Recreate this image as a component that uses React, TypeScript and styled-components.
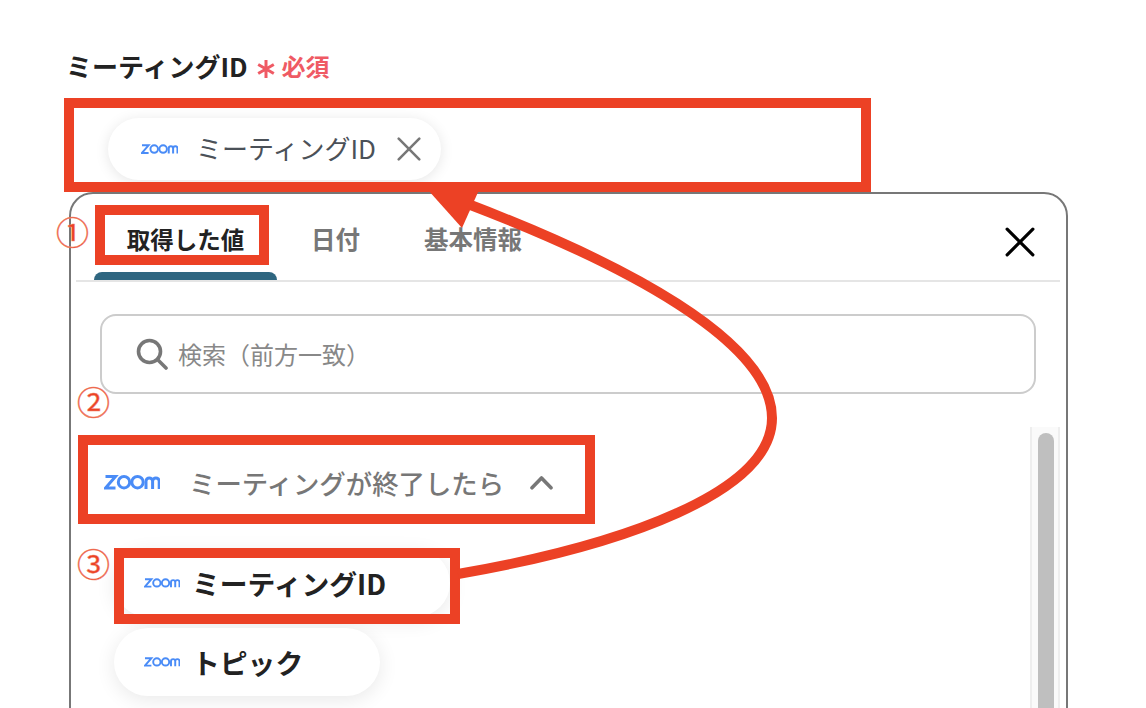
import React from "react";
import styled, { createGlobalStyle } from "styled-components";

const GlobalStyle = createGlobalStyle`
  html, body {
    margin: 0;
    padding: 0;
    background: #fff;
  }
  * {
    box-sizing: border-box;
  }
`;

const ZoomLogo = ({ width }: { width: number }) => (
  <svg width={width} viewBox="0 0 56 18" fill="none" stroke="#4a8cf7" strokeWidth="3">
    <path d="M1.5 3.5H11.5L1.5 15H11.5" />
    <circle cx="20" cy="9.2" r="5.7" />
    <circle cx="33.5" cy="9.2" r="5.7" />
    <path d="M42 16V8.2a3.3 3.3 0 0 1 6.6 0V16M48.6 8.2a3.3 3.3 0 0 1 6.6 0V16" />
  </svg>
);

const CrossIcon = ({ size, color, weight }: { size: number; color: string; weight: number }) => (
  <svg width={size} height={size} viewBox="0 0 28 28" fill="none" stroke={color} strokeWidth={weight} strokeLinecap="round">
    <path d="M2 2L26 26M26 2L2 26" />
  </svg>
);

const App = () => {
  return (
    <Page>
      <GlobalStyle />
      <LabelRow>
        <FieldLabel>ミーティングID</FieldLabel>
        <AsteriskMark width="20" height="20" viewBox="0 0 20 20" fill="none" stroke="#ef5a64" strokeWidth="3">
          <path d="M10 1V19M2.2 5.5L17.8 14.5M17.8 5.5L2.2 14.5" />
        </AsteriskMark>
        <Required>必須</Required>
      </LabelRow>

      <Field>
        <SelectedChip>
          <ZoomLogo width={37} />
          <ChipText>ミーティングID</ChipText>
          <CrossIcon size={24} color="#777" weight={3} />
        </SelectedChip>
      </Field>

      <Panel>
        <TabBar>
          <Tab $active>取得した値</Tab>
          <Tab>日付</Tab>
          <Tab>基本情報</Tab>
          <CloseButton>
            <CrossIcon size={30} color="#000" weight={3} />
          </CloseButton>
        </TabBar>

        <SearchBox>
          <svg width="32" height="32" viewBox="0 0 32 32" fill="none" stroke="#777" strokeWidth="3.6" strokeLinecap="round">
            <circle cx="13.5" cy="13.5" r="11" />
            <path d="M21.5 21.5L30 30" />
          </svg>
          <Placeholder>検索（前方一致）</Placeholder>
        </SearchBox>

        <ListArea>
          <List>
            <GroupRow>
              <ZoomLogo width={56} />
              <GroupTitle>ミーティングが終了したら</GroupTitle>
              <svg width="23" height="15" viewBox="0 0 23 15" fill="none" stroke="#777" strokeWidth="3.6" strokeLinecap="round" strokeLinejoin="round">
                <path d="M2 12.8L11.5 3L21 12.8" />
              </svg>
            </GroupRow>
            <ValueChip $width={336}>
              <ZoomLogo width={36} />
              <ValueText>ミーティングID</ValueText>
            </ValueChip>
            <ValueChip $width={266}>
              <ZoomLogo width={36} />
              <ValueText>トピック</ValueText>
            </ValueChip>
          </List>
          <ScrollTrack>
            <ScrollThumb />
          </ScrollTrack>
        </ListArea>
      </Panel>

      <Frame $left={64} $top={98} $width={807} $height={94} />
      <Frame $left={95} $top={205} $width={174} $height={60} />
      <Frame $left={78} $top={435} $width={517} $height={89} />
      <Frame $left={114} $top={548} $width={346} $height={76} />

      <StepMark $left={56} $top={207}>①</StepMark>
      <StepMark $left={77} $top={377}>②</StepMark>
      <StepMark $left={77} $top={539}>③</StepMark>

      <ArrowLayer width="1146" height="708" viewBox="0 0 1146 708" fill="none">
        <path
          d="M458 574C625 545 772 492 772 418C772 340 620 262 468 204"
          stroke="#ec4125"
          strokeWidth="10"
        />
        <path d="M428 190H479L462 228Z" fill="#ec4125" />
      </ArrowLayer>
    </Page>
  );
};

const Page = styled.div`
  position: relative;
  width: 1146px;
  height: 708px;
  overflow: hidden;
  padding: 46px 78px 0 69px;
  background: #fff;
  font-family: "Noto Sans CJK JP", "Noto Sans", sans-serif;
`;

const LabelRow = styled.div`
  display: flex;
  align-items: center;
  height: 38px;
  margin-left: -3px;
`;

const FieldLabel = styled.span`
  font-size: 26px;
  font-weight: 700;
  color: #222;
`;

const AsteriskMark = styled.svg`
  margin: 7px 6px 0 8px;
`;

const Required = styled.span`
  font-size: 24px;
  font-weight: 700;
  color: #ef5a64;
`;

const Field = styled.div`
  display: flex;
  align-items: center;
  height: 84px;
  width: 797px;
  margin-top: 19px;
  padding: 8px 0 0 37px;
  border: 2px solid #ddd;
  border-radius: 12px;
  background: #fff;
`;

const SelectedChip = styled.div`
  display: flex;
  align-items: center;
  width: 333px;
  height: 62px;
  padding-left: 33px;
  border-radius: 31px;
  background: #fff;
  box-shadow: 0 2px 14px rgba(0, 0, 0, 0.1);

  svg:last-child {
    margin-left: 21px;
  }
`;

const ChipText = styled.span`
  margin: 0 0 4px 18px;
  font-size: 26px;
  color: #4b5158;
`;

const Panel = styled.div`
  display: flex;
  flex-direction: column;
  width: 999px;
  height: 620px;
  margin-top: 5px;
  padding: 0 6px 0 5px;
  border: 2px solid #777;
  border-radius: 24px;
  background: #fff;
`;

const TabBar = styled.div`
  position: relative;
  display: flex;
  gap: 4px;
  height: 88px;
  padding-left: 18px;
  border-bottom: 2px solid #e5e5e5;
`;

const Tab = styled.div<{ $active?: boolean }>`
  position: relative;
  padding: 28px ${(p) => (p.$active ? "32.75px" : "30px")} 0;
  font-size: ${(p) => (p.$active ? "23.5px" : "24.5px")};
  line-height: 34px;
  font-weight: 700;
  color: ${(p) => (p.$active ? "#222" : "#777")};

  ${(p) =>
    p.$active &&
    `
    &::after {
      content: "";
      position: absolute;
      left: 0;
      right: 0;
      bottom: 0;
      height: 8px;
      border-radius: 8px 8px 0 0;
      background: #2f6680;
    }
  `}
`;

const CloseButton = styled.div`
  display: flex;
  margin-left: auto;
  padding: 33px 25px 0 0;
`;

const SearchBox = styled.div`
  display: flex;
  align-items: center;
  gap: 10px;
  width: 936px;
  height: 80px;
  margin: 32px 0 0 24px;
  padding-left: 34px;
  border: 2px solid #ccc;
  border-radius: 16px;
`;

const Placeholder = styled.span`
  margin-bottom: 2px;
  font-size: 24px;
  color: #888;
`;

const ListArea = styled.div`
  display: flex;
  flex: 1;
  margin-top: 33px;
`;

const List = styled.div`
  display: flex;
  flex: 1;
  flex-direction: column;
  align-items: flex-start;
`;

const GroupRow = styled.div`
  display: flex;
  align-items: center;
  height: 110px;
  padding: 0 0 0 28px;
  margin-bottom: 12px;

  svg:last-child {
    margin-left: 26px;
  }
`;

const GroupTitle = styled.span`
  margin-left: 29px;
  font-size: 26.4px;
  font-weight: 500;
  color: #777;
`;

const ValueChip = styled.div<{ $width: number }>`
  display: flex;
  align-items: center;
  width: ${(p) => p.$width}px;
  height: 68px;
  margin: 0 0 11px 38px;
  padding-left: 30px;
  border-radius: 34px;
  background: #fff;
  box-shadow: 0 4px 20px rgba(0, 0, 0, 0.09);
`;

const ValueText = styled.span`
  margin-left: 12px;
  font-size: 27.8px;
  font-weight: 700;
  color: #222;
`;

const ScrollTrack = styled.div`
  width: 30px;
  padding: 6px 6px 0;
  border: solid #eee;
  border-width: 0 2px;
  background: #fafafa;
`;

const ScrollThumb = styled.div`
  width: 16px;
  height: 100%;
  border-radius: 8px 8px 0 0;
  background: #bfbfbf;
`;

const Frame = styled.div<{ $left: number; $top: number; $width: number; $height: number }>`
  position: absolute;
  left: ${(p) => p.$left}px;
  top: ${(p) => p.$top}px;
  width: ${(p) => p.$width}px;
  height: ${(p) => p.$height}px;
  border: 10px solid #ec4125;
`;

const StepMark = styled.span<{ $left: number; $top: number }>`
  position: absolute;
  left: ${(p) => p.$left}px;
  top: ${(p) => p.$top}px;
  font-size: 33px;
  line-height: 48px;
  color: #ec4125;
  -webkit-text-stroke: 0.5px #f08a70;
`;

const ArrowLayer = styled.svg`
  position: absolute;
  left: 0;
  top: 0;
  pointer-events: none;
`;

export default App;
